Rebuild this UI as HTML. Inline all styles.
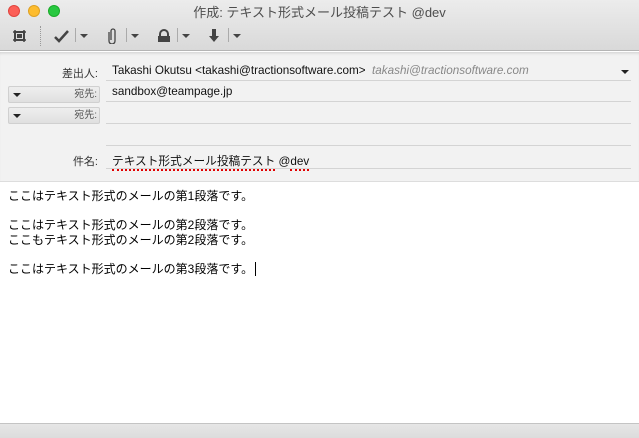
<!DOCTYPE html>
<html><head><meta charset="utf-8"><style>
*{margin:0;padding:0;box-sizing:border-box}
body{width:639px;height:438px;overflow:hidden;background:#fff;font-family:"Liberation Sans","Noto Sans CJK JP",sans-serif;position:relative}
.tb{position:absolute;left:0;top:0;width:639px;height:51px;background:linear-gradient(#ececec,#d9d9d9);border-bottom:1px solid #b5b5b5}
.dot{position:absolute;top:5px;width:12px;height:12px;border-radius:50%}
.title{position:absolute;top:2px;left:0;width:639px;text-align:center;font-size:13px;color:#4d4d4d}
.hdr{position:absolute;left:0;top:52px;width:639px;height:130px;background:#f2f2f2;border-bottom:1px solid #ddd;box-shadow:inset 0 3px 3px -2px rgba(0,0,0,.15)}
.lab{position:absolute;right:541px;font-size:11px;color:#333;text-align:right}
.line{position:absolute;left:106px;width:525px;height:1px;background:#d4d4d4}
.val{position:absolute;left:112px;font-size:11.7px;color:#111}
.btn{position:absolute;left:8px;width:92px;height:17px;background:linear-gradient(#eee,#e0e0e0);border:1px solid #d0d0d0;border-radius:2px;font-size:10px;color:#555;text-align:right;padding-right:2px;line-height:15px}
.btn:before{content:"";position:absolute;left:4px;top:6px;border:4px solid transparent;border-top:4px solid #222;border-bottom:0}
.body{position:absolute;left:8px;top:189px;font-size:12px;line-height:14.5px;color:#000}
.foot{position:absolute;left:0;top:423px;width:639px;height:15px;background:linear-gradient(#e6e6e6,#dcdcdc);border-top:1px solid #c4c4c4}
.tri{position:absolute;border:4px solid transparent;border-top:4px solid #444;border-bottom:0}
.sep{position:absolute;top:28px;width:1px;height:14px;background:#aaa}
.sp{border-bottom:2px dotted #e00000;padding-bottom:1px}
</style></head><body>
<div class="tb">
<div class="dot" style="left:8px;background:#fc5f57;border:1px solid #e0443e"></div>
<div class="dot" style="left:28px;background:#fdbc2e;border:1px solid #dea123"></div>
<div class="dot" style="left:48px;background:#28c840;border:1px solid #1aab29"></div>
<div class="title">作成: テキスト形式メール投稿テスト @dev</div>
<svg style="position:absolute;left:12px;top:29px" width="15" height="14" viewBox="0 0 15 14"><rect x="3" y="3" width="9" height="8" fill="none" stroke="#444" stroke-width="2"/><rect x="5" y="5" width="5" height="4" fill="#444"/><path d="M1 3h13M1 11h13M3 1v12M12 1v12" stroke="#444" stroke-width="1.5"/></svg>
<div style="position:absolute;left:40px;top:26px;height:20px;border-left:1px dotted #999"></div>
<svg style="position:absolute;left:54px;top:30px" width="16" height="13"><path d="M1 7l4 4 9-10" stroke="#444" stroke-width="2.5" fill="none"/></svg>
<div class="sep" style="left:75px"></div><div class="tri" style="left:80px;top:34px"></div>
<svg style="position:absolute;left:108px;top:27px" width="10" height="17"><path d="M3 13V4a2 2 0 0 1 4 0v10a3 3 0 0 1-6 0V5" stroke="#444" stroke-width="1.3" fill="none"/></svg>
<div class="sep" style="left:126px"></div><div class="tri" style="left:131px;top:34px"></div>
<svg style="position:absolute;left:157px;top:29px" width="14" height="14"><path d="M3 7V5a4 4 0 0 1 8 0v2" stroke="#444" stroke-width="2" fill="none"/><rect x="1" y="7" width="12" height="6" fill="#444"/></svg>
<div class="sep" style="left:177px"></div><div class="tri" style="left:182px;top:34px"></div>
<svg style="position:absolute;left:208px;top:29px" width="12" height="14"><path d="M4 0h4v7h3l-5 6-5-6h3z" fill="#444"/></svg>
<div class="sep" style="left:228px"></div><div class="tri" style="left:233px;top:34px"></div>
</div>
<div class="hdr"></div>
<div class="lab" style="top:65px">差出人:</div>
<div class="val" style="top:64px">Takashi Okutsu &lt;takashi@tractionsoftware.com&gt; &nbsp;<i style="color:#888">takashi@tractionsoftware.com</i></div>
<div class="tri" style="left:621px;top:70px;border-top-color:#222"></div>
<div class="line" style="top:80px"></div>
<div class="btn" style="top:86px">宛先:</div>
<div class="val" style="top:85px">sandbox@teampage.jp</div>
<div class="line" style="top:101px"></div>
<div class="btn" style="top:107px">宛先:</div>
<div class="line" style="top:123px"></div>
<div class="line" style="top:145px"></div>
<div class="lab" style="top:153px">件名:</div>
<div class="val" style="top:152px"><span class="sp">テキスト形式メール投稿テスト</span> @<span class="sp">dev</span></div>
<div class="line" style="top:168px"></div>
<div class="body">ここはテキスト形式のメールの第1段落です。<br><br>ここはテキスト形式のメールの第2段落です。<br>ここもテキスト形式のメールの第2段落です。<br><br>ここはテキスト形式のメールの第3段落です。 <span style="border-left:1px solid #000;margin-left:2px"></span></div>
<div class="foot"></div>
</body></html>
